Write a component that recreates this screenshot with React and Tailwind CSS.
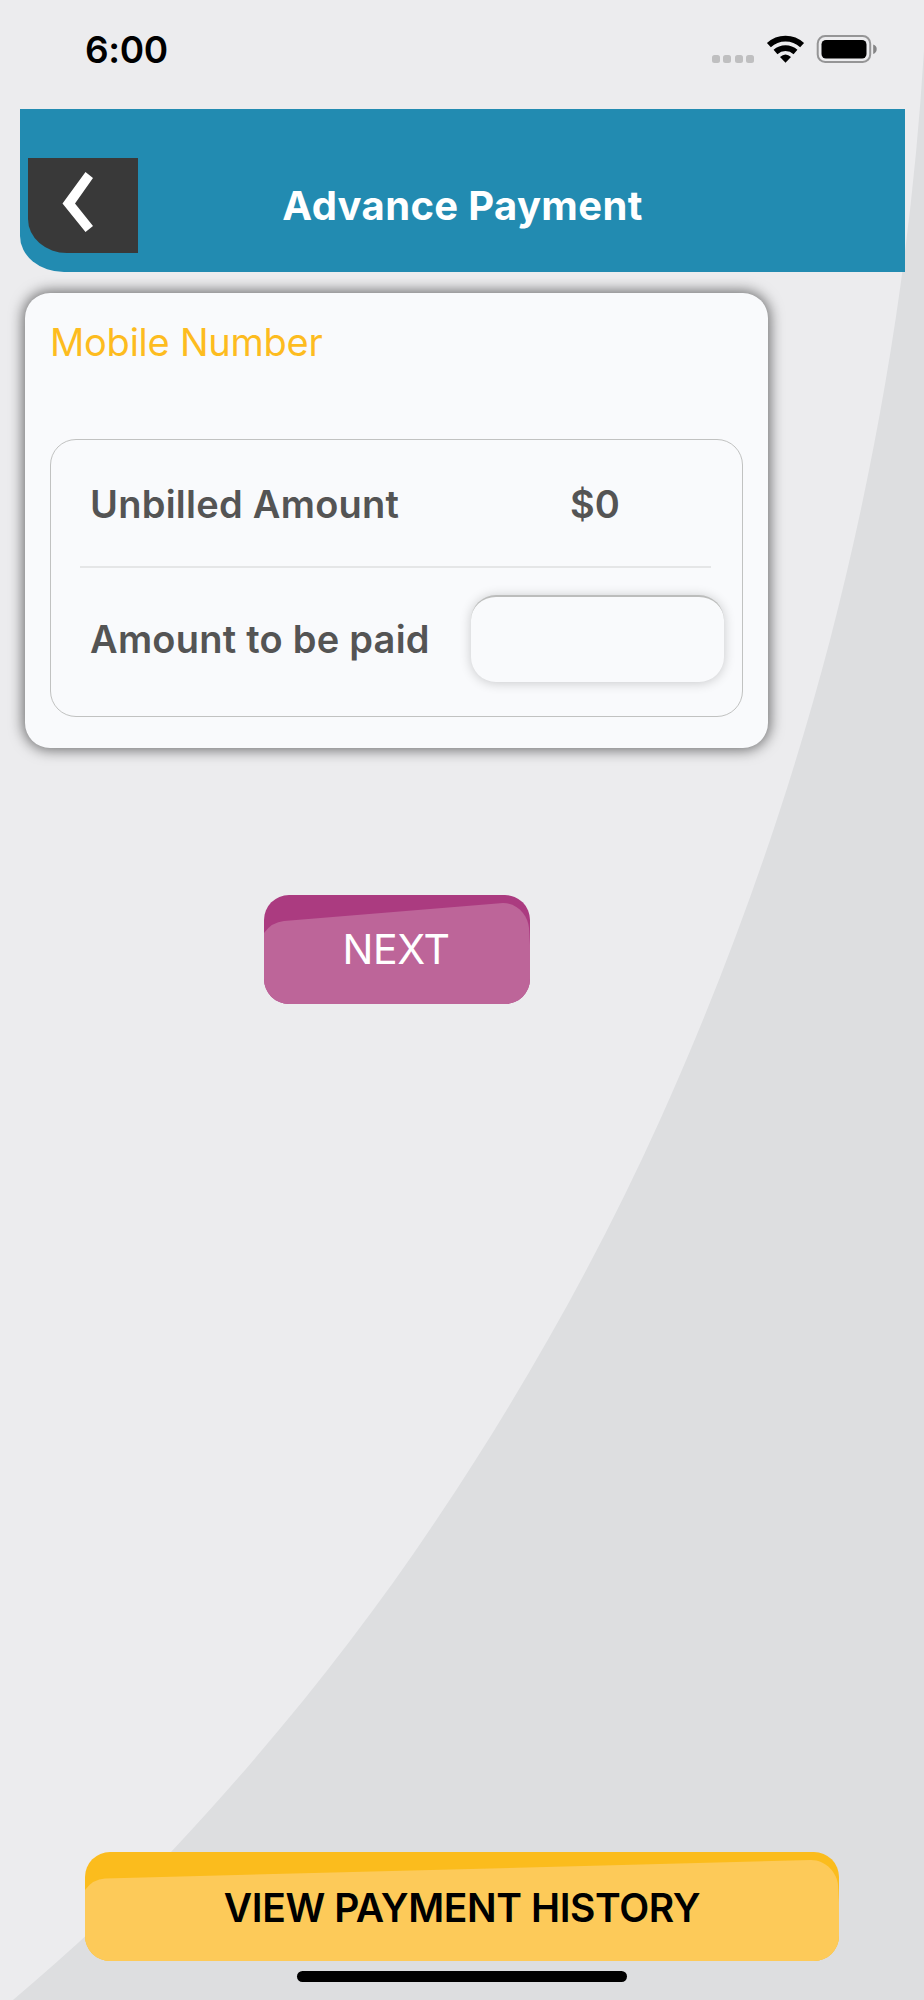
import * as React from "react"

const StatusBar = () => (
  <div className="flex h-[109px] items-start justify-between pl-[85px] pr-[46px] pt-[27px]">
    <p className="text-[37px] leading-[45px] font-semibold tracking-[-0.4px] text-black">6:00</p>
    <div className="flex items-start pt-[7px]">
      <div className="flex gap-[3.5px] pt-[21px]">
        <span className="h-2 w-2 rounded-[2.5px] bg-[#bfbfc0]" />
        <span className="h-2 w-2 rounded-[2.5px] bg-[#bfbfc0]" />
        <span className="h-2 w-2 rounded-[2.5px] bg-[#bfbfc0]" />
        <span className="h-2 w-2 rounded-[2.5px] bg-[#bfbfc0]" />
      </div>
      <svg className="ml-3 h-[30px] w-[40px]" viewBox="0 0 40 30">
        <path
          d="M2.9 11.2 A24.5 24.5 0 0 1 36.1 11.2 M9.5 18 A15 15 0 0 1 29.5 18"
          fill="none"
          stroke="#000"
          strokeWidth="5.8"
        />
        <path d="M19.5 28.8 L14 23 Q19.5 18 25 23 Z" fill="#000" />
      </svg>
      <svg className="ml-[10px] h-[30px] w-[62px]" viewBox="-0.7 0 62 30">
        <rect x="1" y="2" width="52.5" height="26" rx="7.5" fill="none" stroke="#959596" strokeWidth="2" />
        <rect x="4.8" y="6" width="45" height="18.5" rx="4.5" fill="#000" />
        <path d="M56.5 10.5 Q60 11.5 60 15 Q60 18.5 56.5 20 Z" fill="#858586" />
      </svg>
    </div>
  </div>
)

const Header = () => (
  <header className="ml-5 mr-[19px] grid h-[163px] grid-cols-[110px_1fr_118px] items-end rounded-bl-[44px_36px] bg-[#228bb1] pb-[19px] pl-2">
    <button
      type="button"
      aria-label="Back"
      className="h-[95px] w-[110px] rounded-bl-[39px_34px] bg-[#393939]"
    >
      <svg className="h-[95px] w-[110px]" viewBox="28 158 110 95">
        <path d="M85.5 172 L93 178 L75 203.5 L93 226 L85.5 232 L62.5 203.5 Z" fill="#fff" />
      </svg>
    </button>
    <h1 className="whitespace-nowrap pb-[23px] text-center text-[40px] leading-[48px] font-bold tracking-[0.35px] text-white">
      Advance Payment
    </h1>
  </header>
)

const PaymentCard = () => {
  const [amount, setAmount] = React.useState("")

  return (
    <section className="ml-[25px] mt-[21px] h-[455px] w-[743px] rounded-[25px] bg-[#f9fafc] px-[25px] pt-[25px] shadow-[0_0_14px_2px_rgba(0,0,0,0.55)]">
      <h2 className="h-[121px] text-[38px] leading-[48px] tracking-[-0.25px] text-[#fdbc1f]">
        Mobile Number
      </h2>
      <div className="h-[278px] w-[693px] rounded-[26px] border border-[#c1c2c1] pl-[29px] pr-[18px] text-[38px] font-semibold tracking-[0.25px] text-[#545454]">
        <div className="mr-[13px] flex h-[128px] items-center border-b-2 border-[#e5e6e7] pl-[10px] pt-[2px]">
          <p className="w-[480px]">Unbilled Amount</p>
          <p className="tracking-normal">$0</p>
        </div>
        <div className="flex h-[142px] items-center justify-between pl-[10px]">
          <p className="whitespace-nowrap">Amount to be paid</p>
          <input
            value={amount}
            onChange={e => setAmount(e.target.value)}
            className="mb-[2px] h-[87px] w-[253px] rounded-[25px] border-t-2 border-[#bcbdbc] bg-[#f9fafc] px-5 shadow-[0_1px_12px_rgba(0,0,0,0.2)] outline-none"
          />
        </div>
      </div>
    </section>
  )
}

const App = () => {
  return (
    <div className="relative h-[2000px] w-[924px] overflow-hidden bg-[#ececee] font-['Inter',sans-serif]">
      {/* Background curve */}
      <svg className="absolute inset-0 h-full w-full" viewBox="0 0 924 2000">
        <path
          d="M924 50 C912 247 881 443 830 640 C788 800 732 960 660 1120 C600 1253 526 1386 437 1519 C363 1630 275 1741 171 1852 C125 1901 71 1951 13 2000 H924 Z"
          fill="#dddee0"
        />
      </svg>

      <div className="relative flex h-full flex-col">
        <StatusBar />
        <Header />
        <PaymentCard />

        {/* Next button */}
        <button
          type="button"
          className="relative ml-[264px] mt-[147px] h-[109px] w-[266px] overflow-hidden rounded-[25px] bg-[#ab3b80] pb-[2px]"
        >
          <svg className="absolute inset-0 h-full w-full" viewBox="0 0 266 109">
            <path d="M0 38 Q8 27 20 26 L239 8 C254 8 264 21 265 33 L266 50 V109 H0 Z" fill="#bd6599" />
          </svg>
          <span className="relative mr-[2px] text-[41px] leading-[48px] tracking-[-0.3px] text-white">
            NEXT
          </span>
        </button>

        {/* History button */}
        <button
          type="button"
          className="relative ml-[85px] mt-auto h-[109px] w-[754px] overflow-hidden rounded-[25px] bg-[#fbbc1d] pt-[2px]"
        >
          <svg className="absolute inset-0 h-full w-full" viewBox="0 0 754 109">
            <path d="M0 38 Q8 27 20 26.5 L726 8 C741 8 752 21 753 33 L754 50 V109 H0 Z" fill="#fdca59" />
          </svg>
          <span className="relative text-[39px] leading-[48px] font-semibold tracking-[-0.4px] text-black">
            VIEW PAYMENT HISTORY
          </span>
        </button>

        {/* Home indicator */}
        <div className="mx-auto mb-[18px] mt-[10px] h-[11px] w-[330px] shrink-0 rounded-full bg-black" />
      </div>
    </div>
  )
}

export default App
